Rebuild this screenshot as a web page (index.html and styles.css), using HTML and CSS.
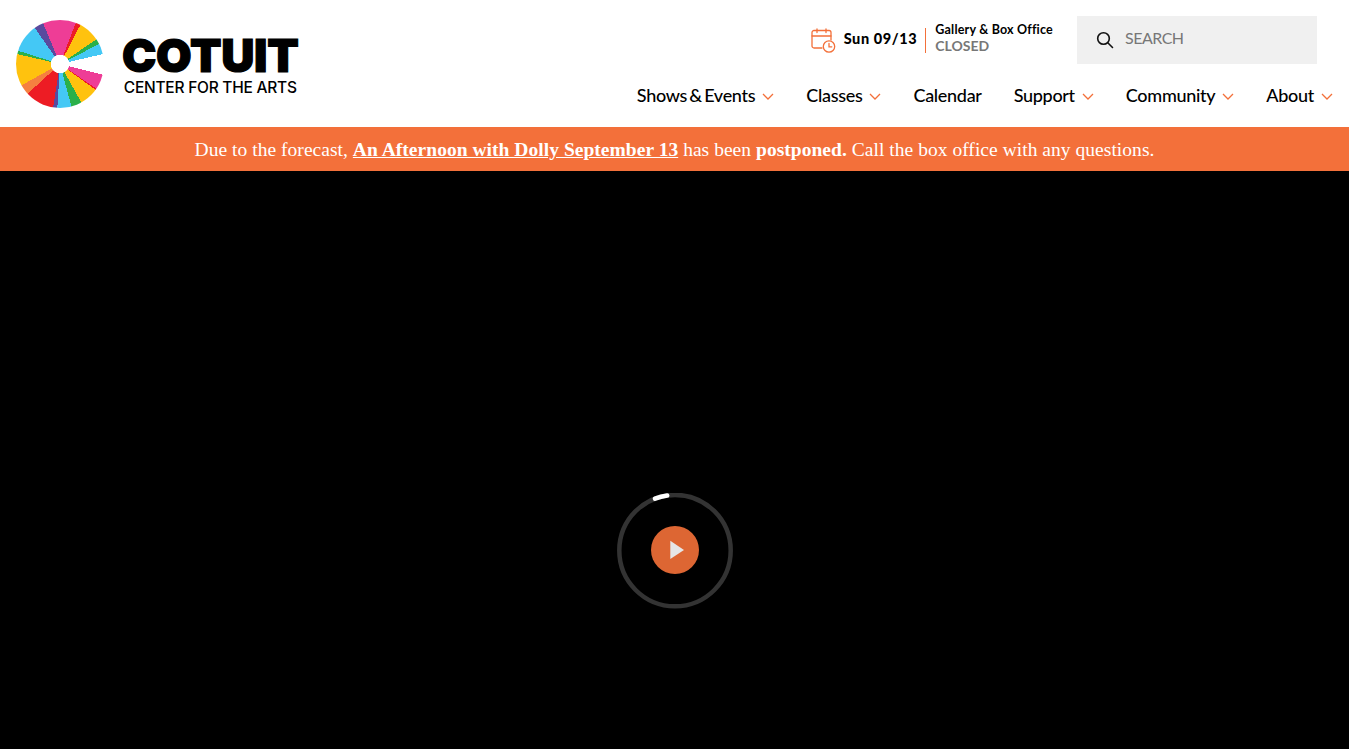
FILE: index.html
```html
<!DOCTYPE html>
<html lang="en">
<head>
  <meta charset="UTF-8" />
  <meta name="viewport" content="width=device-width, initial-scale=1.0" />
  <title>Cotuit Center for the Arts</title>
  <link rel="stylesheet" href="styles.css">
</head>
<body>

  <!-- Header -->
  <header class="site-header">
    <a class="logo" href="#">
      <span class="wheel"></span>
      <span class="wordmark">
        <span class="wordmark-top">COTUIT</span>
        <span class="wordmark-sub">CENTER FOR THE ARTS</span>
      </span>
    </a>

    <div class="header-right">
      <div class="utility">
        <div class="today">
          <svg class="cal-icon" width="25" height="25" viewBox="0 0 25 25" fill="none" stroke="#F3703A" stroke-width="1.3" stroke-linecap="round">
            <path d="M11 20H3a2 2 0 0 1-2-2V4.500a2 2 0 0 1 2-2h15a2 2 0 0 1 2 2V12"/>
            <path d="M1 8h19M6 1v3.500M15 1v3.500"/>
            <circle cx="18" cy="18.500" r="5.700" fill="#fff"/>
            <path d="M18 15.500v3.300h2.800"/>
          </svg>
          <span class="today-date">Sun 09/13</span>
        </div>
        <div class="hours">
          <span class="hours-label">Gallery &amp; Box Office</span>
          <span class="hours-status">CLOSED</span>
        </div>
        <div class="search">
          <svg width="18" height="18" viewBox="0 0 18 18" fill="none" stroke="#111" stroke-width="1.600" stroke-linecap="round">
            <circle cx="7.500" cy="7.500" r="5.800"/>
            <path d="M11.800 11.800L16.500 16.500"/>
          </svg>
          <span class="search-text">SEARCH</span>
        </div>
      </div>

      <nav class="main-nav">
        <a href="#">Shows &amp; Events<svg class="chev" width="12" height="7" viewBox="0 0 12 7"><path d="M1 1l5 5 5-5"/></svg></a>
        <a href="#">Classes<svg class="chev" width="12" height="7" viewBox="0 0 12 7"><path d="M1 1l5 5 5-5"/></svg></a>
        <a href="#">Calendar</a>
        <a href="#">Support<svg class="chev" width="12" height="7" viewBox="0 0 12 7"><path d="M1 1l5 5 5-5"/></svg></a>
        <a href="#">Community<svg class="chev" width="12" height="7" viewBox="0 0 12 7"><path d="M1 1l5 5 5-5"/></svg></a>
        <a href="#">About<svg class="chev" width="12" height="7" viewBox="0 0 12 7"><path d="M1 1l5 5 5-5"/></svg></a>
      </nav>
    </div>
  </header>

  <!-- Alert -->
  <div class="alert">
    Due to the forecast, <a href="#">An Afternoon with Dolly September 13</a> has been <strong>postponed.</strong> Call the box office with any questions.
  </div>

  <!-- Video -->
  <main class="video">
    <svg class="player" width="116" height="116" viewBox="0 0 116 116">
      <circle cx="58" cy="57.600" r="55.700" fill="none" stroke="#333" stroke-width="4.500"/>
      <circle cx="58" cy="57.600" r="55.700" fill="none" stroke="#fff" stroke-width="4.500" stroke-linecap="round" pathLength="360" stroke-dasharray="13 347" transform="rotate(-111 58 57.600)"/>
      <circle cx="58" cy="57" r="24" fill="#DD6633"/>
      <path d="M53.300 47.700V66L67 57z" fill="#E6E6E6"/>
    </svg>
  </main>

</body>
</html>
```

FILE: styles.css
```css
html, body {
  height: 100%;
}

body {
  margin: 0;
  display: flex;
  flex-direction: column;
  overflow: hidden;
  background: #000;
  color: #000;
  font-family: 'Lato', sans-serif;
}

a {
  color: inherit;
  text-decoration: none;
}

.site-header {
  flex: none;
  height: 127px;
  box-sizing: border-box;
  display: flex;
  justify-content: space-between;
  background: #fff;
  padding: 16px 16px 0 16px;
}

.logo {
  display: flex;
  align-items: flex-start;
  gap: 18px;
  padding-top: 4px;
}

.wheel {
  display: block;
  width: 88px;
  height: 88px;
  border-radius: 50%;
  background:
    radial-gradient(circle, #fff 9px, transparent 9.500px),
    conic-gradient(
      #EE3D96 0deg 21deg,
      #ED1C24 21deg 27.500deg,
      #FFC20E 27.500deg 56deg,
      #2BB04A 56deg 63deg,
      #44C8F5 63deg 77deg,
      #fff 77deg 104deg,
      #EE3D96 104deg 124deg,
      #ED1C24 124deg 126deg,
      #FFC20E 126deg 151deg,
      #2BB04A 151deg 165deg,
      #44C8F5 165deg 183.500deg,
      #5A4A9E 183.500deg 189deg,
      #ED1C24 189deg 227.500deg,
      #F58040 227.500deg 241deg,
      #FFC20E 241deg 283deg,
      #2BB04A 283deg 287.500deg,
      #44C8F5 287.500deg 325deg,
      #5A4A9E 325deg 337.500deg,
      #EE3D96 337.500deg 360deg
    );
}

.wordmark {
  display: flex;
  flex-direction: column;
  align-items: center;
  gap: 4px;
  padding-top: 15px;
}

.wordmark-top {
  font-family: 'Inter', sans-serif;
  font-weight: 900;
  font-size: 46px;
  line-height: 40px;
  letter-spacing: -0.300px;
  -webkit-text-stroke: 1.200px #000;
}

.wordmark-sub {
  font-family: 'Inter', sans-serif;
  font-weight: 500;
  font-size: 15.500px;
  line-height: 18px;
  letter-spacing: -0.250px;
  white-space: nowrap;
}

.header-right {
  display: flex;
  flex-direction: column;
  align-items: flex-end;
  gap: 15px;
}

.utility {
  display: flex;
  align-items: center;
  height: 48px;
  margin-right: 16px;
}

.today {
  display: flex;
  align-items: center;
  gap: 8px;
  padding-right: 8px;
}

.cal-icon {
  margin-top: 1px;
}

.today-date {
  font-weight: 900;
  font-size: 14.500px;
  letter-spacing: 0.600px;
  margin-bottom: 4px;
}

.hours {
  display: flex;
  flex-direction: column;
  justify-content: center;
  height: 25px;
  border-left: 1px solid #F3703A;
  padding-left: 9px;
  margin-right: 24px;
  margin-top: 1px;
}

.hours-label {
  font-weight: 700;
  font-size: 12.500px;
  line-height: 16px;
  letter-spacing: 0.200px;
  margin-top: -6px;
}

.hours-status {
  font-weight: 700;
  font-size: 14px;
  line-height: 17px;
  color: #777;
  margin-top: -1px;
}

.search {
  display: flex;
  align-items: center;
  gap: 11px;
  width: 240px;
  height: 48px;
  box-sizing: border-box;
  padding-left: 19px;
  background: #F0F0F0;
}

.search-text {
  font-size: 16px;
  letter-spacing: -0.500px;
  color: #777;
  margin-bottom: 6px;
}

.main-nav {
  display: flex;
  gap: 32px;
}

.main-nav a {
  display: flex;
  align-items: center;
  gap: 7px;
  font-size: 18px;
  font-weight: 500;
  line-height: 32px;
  letter-spacing: -0.300px;
  word-spacing: -2px;
  white-space: nowrap;
}

.chev {
  fill: none;
  stroke: #F3703A;
  stroke-width: 1.300;
  margin-top: 2px;
}

.alert {
  flex: none;
  height: 44px;
  box-sizing: border-box;
  padding-top: 1px;
  line-height: 44px;
  background: #F3703A;
  color: #fff;
  text-align: center;
  font-family: 'Liberation Serif', serif;
  font-size: 19.500px;
  letter-spacing: 0.035px;
}

.alert a {
  font-weight: 700;
  text-decoration: underline;
}

.video {
  flex: 1;
  display: flex;
  justify-content: center;
  padding-top: 322px;
  background: #000;
}

.player {
  display: block;
}
```
